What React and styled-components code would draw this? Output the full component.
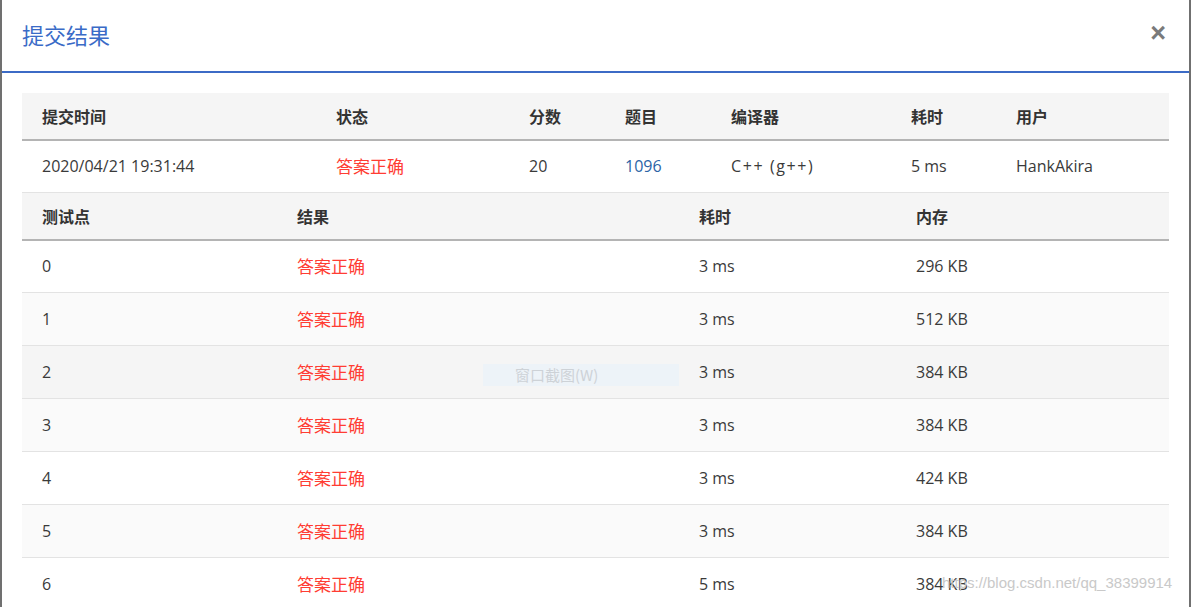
import styled, { createGlobalStyle } from "styled-components";

const GlobalStyle = createGlobalStyle`
  html, body {
    margin: 0;
    padding: 0;
    background: #ffffff;
  }
  body {
    font-family: "Open Sans", "Noto Sans CJK SC", sans-serif;
    color: #333;
  }
`;

const summaryCols = [294, 193, 96, 106, 180, 105, 173];
const caseCols = [255, 402, 217, 273];

const cases = [
  { id: 0, time: "3 ms", mem: "296 KB" },
  { id: 1, time: "3 ms", mem: "512 KB" },
  { id: 2, time: "3 ms", mem: "384 KB" },
  { id: 3, time: "3 ms", mem: "384 KB" },
  { id: 4, time: "3 ms", mem: "424 KB" },
  { id: 5, time: "3 ms", mem: "384 KB" },
  { id: 6, time: "5 ms", mem: "384 KB" },
];

export default function App() {
  return (
    <>
      <GlobalStyle />
      <Modal>
        <Header>
          <Title>提交结果</Title>
          <Close>×</Close>
        </Header>
        <Body>
          <Table>
            <colgroup>
              {summaryCols.map((w, i) => (
                <col key={i} style={{ width: w }} />
              ))}
            </colgroup>
            <thead>
              <tr>
                <Th>提交时间</Th>
                <Th>状态</Th>
                <Th>分数</Th>
                <Th>题目</Th>
                <Th>编译器</Th>
                <Th>耗时</Th>
                <Th>用户</Th>
              </tr>
            </thead>
            <tbody>
              <Row $tall>
                <Td>2020/04/21 19:31:44</Td>
                <Td $accepted>答案正确</Td>
                <Td>20</Td>
                <Td $link>1096</Td>
                <Td $spaced>C++ (g++)</Td>
                <Td>5 ms</Td>
                <Td>HankAkira</Td>
              </Row>
            </tbody>
          </Table>
          <Table>
            <colgroup>
              {caseCols.map((w, i) => (
                <col key={i} style={{ width: w }} />
              ))}
            </colgroup>
            <thead>
              <tr>
                <Th>测试点</Th>
                <Th>结果</Th>
                <Th>耗时</Th>
                <Th>内存</Th>
              </tr>
            </thead>
            <tbody>
              {cases.map((c) => (
                <Row key={c.id} $hover={c.id === 2} $striped={c.id % 2 === 1}>
                  <Td>{c.id}</Td>
                  <Td $accepted>答案正确</Td>
                  <Td>{c.time}</Td>
                  <Td>{c.mem}</Td>
                </Row>
              ))}
            </tbody>
          </Table>
        </Body>
        <Tip>窗口截图(W)</Tip>
        <Watermark>https://blog.csdn.net/qq_38399914</Watermark>
      </Modal>
    </>
  );
}

const Modal = styled.div`
  position: relative;
  box-sizing: border-box;
  width: 1191px;
  height: 607px;
  overflow: hidden;
  background: #fff;
  border-left: 2px solid #707070;
  border-right: 2px solid #707070;
`;

const Header = styled.div`
  display: flex;
  align-items: center;
  justify-content: space-between;
  height: 73px;
  box-sizing: border-box;
  padding: 0 20px 3px 20px;
  border-bottom: 2px solid #3c6bc6;
`;

const Title = styled.h1`
  margin: 0;
  font-size: 22px;
  font-weight: 400;
  color: #3a6bc7;
  font-family: "Noto Sans CJK SC", sans-serif;
`;

const Close = styled.span`
  font-size: 27px;
  font-weight: 700;
  line-height: 1;
  color: #7a7a7a;
  margin-right: 3px;
  margin-top: -1px;
  font-family: "Liberation Sans", sans-serif;
`;

const Body = styled.div`
  padding: 20px 20px 0 20px;
`;

const Table = styled.table`
  width: 100%;
  border-collapse: collapse;
  table-layout: fixed;
  font-size: 16px;
`;

const Th = styled.th`
  height: 46px;
  padding: 0 0 0 20px;
  text-align: left;
  font-weight: 700;
  font-size: 16px;
  line-height: 20px;
  color: #333;
  background: #f5f5f5;
  border-bottom: 2px solid #b4b4b4;
  font-family: "Noto Sans CJK SC", sans-serif;
  vertical-align: middle;
`;

const Row = styled.tr`
  height: ${(p) => (p.$tall ? "52px" : "53px")};
  background: ${(p) => (p.$hover ? "#f5f5f5" : p.$striped ? "#fafafa" : "#fff")};
  border-bottom: 1px solid #e3e3e3;
`;

const Td = styled.td`
  padding: 0 0 0 20px;
  vertical-align: middle;
  line-height: 20px;
  font-size: ${(p) => (p.$accepted ? "17px" : "16px")};
  letter-spacing: ${(p) => (p.$spaced ? "1.6px" : "0")};
  color: ${(p) => (p.$accepted ? "#ff3d33" : p.$link ? "#2c64a6" : "#3a3a3a")};
  font-family: ${(p) =>
    p.$accepted ? `"Noto Sans CJK SC", sans-serif` : `"Open Sans", "Noto Sans CJK SC", sans-serif`};
  white-space: nowrap;
`;

const Tip = styled.div`
  position: absolute;
  left: 481px;
  top: 364px;
  width: 164px;
  height: 22px;
  padding-left: 32px;
  background: #edf3f8;
  color: #cdd2d7;
  font-size: 15px;
  line-height: 22px;
  font-family: "Noto Sans CJK SC", sans-serif;
`;

const Watermark = styled.div`
  position: absolute;
  left: 940px;
  top: 574px;
  font-size: 15px;
  color: #c9c9c9;
  font-family: "Liberation Sans", sans-serif;
`;
